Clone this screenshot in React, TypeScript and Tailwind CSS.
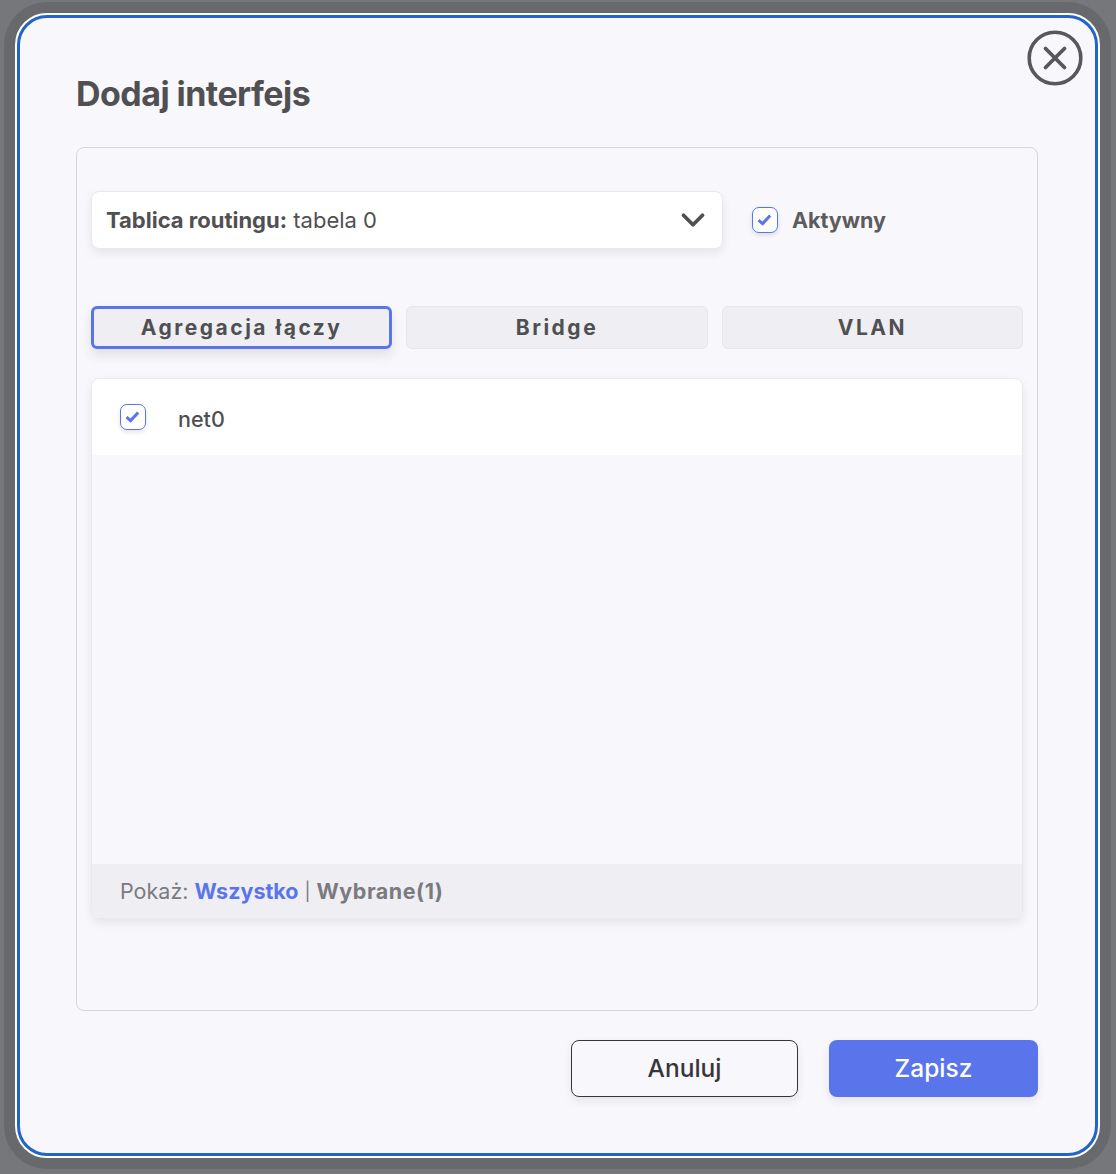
import { ChevronDown } from "lucide-react";

const font = { fontFamily: "Inter, 'Noto Sans', sans-serif" };

function Checkbox() {
  return (
    <span className="flex h-[26px] w-[26px] shrink-0 items-center justify-center rounded-[7px] border border-[#5a75ec] bg-white shadow-[0_2px_5px_rgba(0,0,0,0.12)]">
      <svg width="24" height="24" viewBox="0 0 24 24" fill="none" stroke="#5a75ec" strokeWidth="3" className="block">
        <path d="M5.5 12.2 9.6 15.6 17.2 7.4" />
      </svg>
    </span>
  );
}

function Tab({ label, active }: { label: string; active?: boolean }) {
  return (
    <button
      className={`h-[43px] rounded-[6px] bg-[#eeeef3] text-[21px] font-bold tracking-[2.5px] text-[#505052] ${
        active
          ? "border-[3px] border-[#5a75ec] shadow-[0_6px_12px_rgba(0,0,0,0.1)]"
          : "border border-[#e6e6eb]"
      }`}
    >
      {label}
    </button>
  );
}

export default function App() {
  return (
    <div style={font} className="h-[1174px] w-[1116px] overflow-hidden bg-[#76777b] pl-[15px] pt-[13px]">
      <div className="relative h-[1145px] w-[1085px] rounded-[32px] border-2 border-white bg-[#f7f7fc] shadow-[0_0_0_11px_#68696c]">
        <div className="h-full rounded-[30px] border-[3px] border-[#2364c8] pl-[56px] pr-[57px] pt-[52px]">
          <h1 className="text-[34px] leading-[48px] font-bold tracking-[-0.55px] text-[#505052]">Dodaj interfejs</h1>

          <button className="absolute right-[15px] top-[15px] text-[#58585a]">
            <svg width="56" height="56" viewBox="0 0 56 56" fill="none" stroke="currentColor" className="block">
              <circle cx="28" cy="28" r="25.8" strokeWidth="3.6" />
              <path d="M18.5 18.5 37.5 37.5M37.5 18.5 18.5 37.5" strokeWidth="3.8" strokeLinecap="round" />
            </svg>
          </button>

          <div className="mt-[29px] h-[864px] rounded-[8px] border border-[#d6d6dd] px-[14px] pt-[43px]">
            <div className="flex items-center">
              <div className="flex h-[58px] w-[632px] items-center justify-between rounded-[8px] border border-[#e8e8ed] bg-white pl-[14px] pr-[10px] shadow-[0_4px_10px_rgba(0,0,0,0.08)]">
                <span className="text-[22px] text-[#505052]">
                  <span className="font-bold">Tablica routingu:</span> tabela 0
                </span>
                <ChevronDown className="h-[38px] w-[38px] text-[#505052]" strokeWidth={2.4} />
              </div>
              <div className="ml-[29px] flex items-center gap-[14px]">
                <Checkbox />
                <span className="text-[21.5px] font-bold text-[#5c5c60]">Aktywny</span>
              </div>
            </div>

            <div className="mt-[57px] grid grid-cols-3 gap-[14px]">
              <Tab label="Agregacja łączy" active />
              <Tab label="Bridge" />
              <Tab label="VLAN" />
            </div>

            <div className="mt-[29px] flex h-[541px] flex-col overflow-hidden rounded-[8px] border border-[#e8e8ed] shadow-[0_4px_10px_rgba(0,0,0,0.08)]">
              <div className="flex h-[76px] items-center gap-[32px] bg-white pl-[28px]">
                <Checkbox />
                <span className="mt-[4px] text-[21.5px] font-medium text-[#505052]">net0</span>
              </div>
              <div className="flex-1" />
              <div className="flex h-[54px] items-center bg-[#eeeef3] pl-[28px] text-[21.5px] text-[#7b7b7f]">
                Pokaż:&nbsp;<span className="font-bold text-[#5a75ec]">Wszystko</span>
                <span className="mx-[6px] text-[18px]">|</span>
                <span className="font-bold tracking-[0.5px]">Wybrane(1)</span>
              </div>
            </div>
          </div>

          <div className="mt-[29px] flex justify-end gap-[31px]">
            <button className="h-[57px] w-[227px] rounded-[8px] border border-[#36363a] text-[24.5px] font-medium text-[#36363a] shadow-[0_4px_10px_rgba(0,0,0,0.08)]">
              Anuluj
            </button>
            <button className="h-[57px] w-[209px] rounded-[8px] bg-[#5a75ec] text-[24.5px] font-medium text-white shadow-[0_4px_10px_rgba(0,0,0,0.08)]">
              Zapisz
            </button>
          </div>
        </div>
      </div>
    </div>
  );
}
